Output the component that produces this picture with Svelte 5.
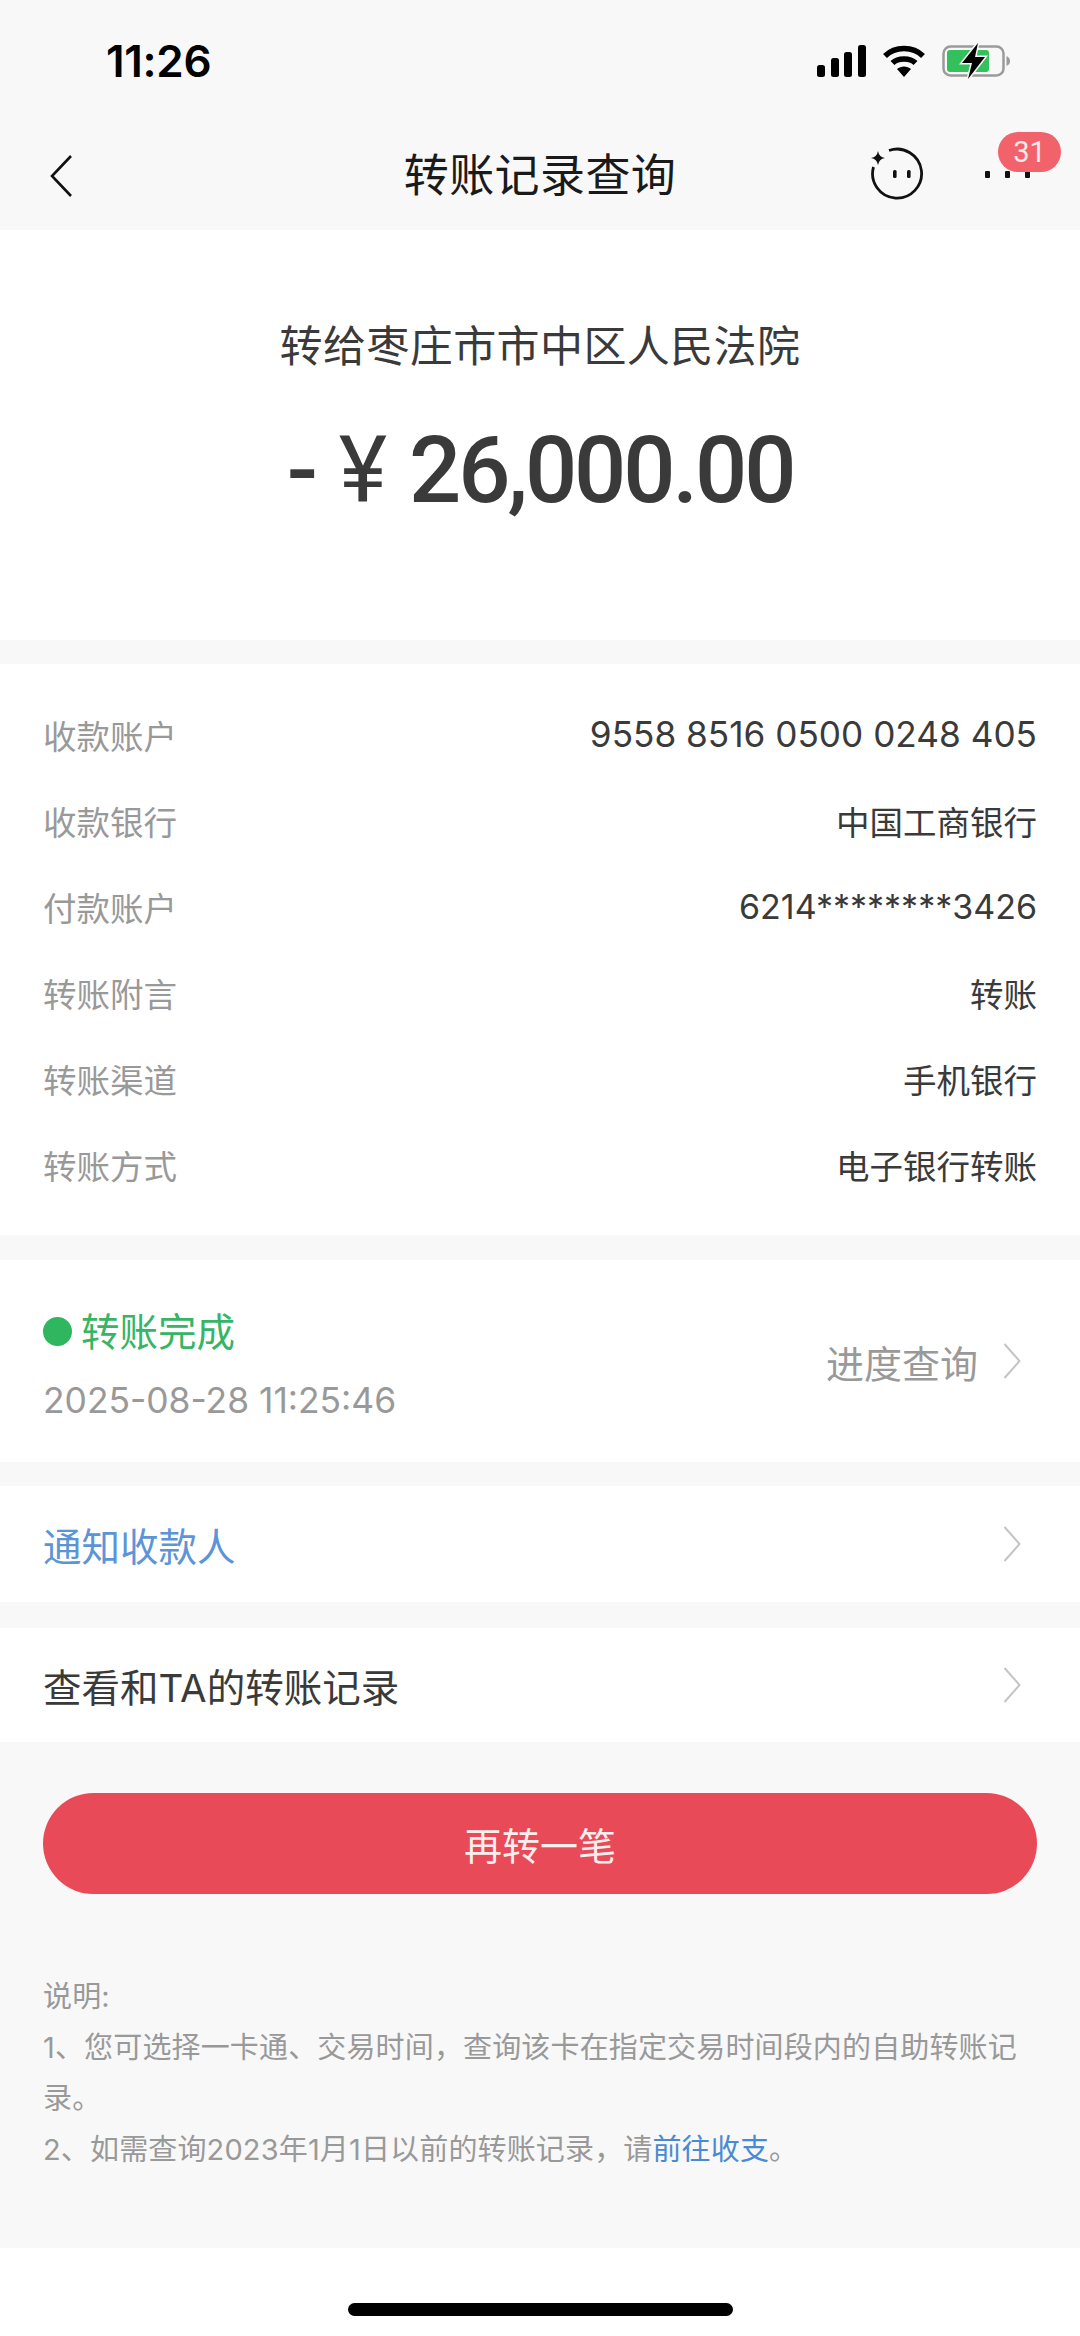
<script>
  const infoRows = [
    { label: '收款账户', value: '9558 8516 0500 0248 405', kind: 'card' },
    { label: '收款银行', value: '中国工商银行' },
    { label: '付款账户', value: '6214********3426', kind: 'masked' },
    { label: '转账附言', value: '转账' },
    { label: '转账渠道', value: '手机银行' },
    { label: '转账方式', value: '电子银行转账' }
  ];
</script>

{#snippet chevron()}
  <svg class="chevron" viewBox="0 0 18 36" width="18" height="36">
    <path d="M1.5 1 L16.5 18 L1.5 35" fill="none" stroke="#c4c4c4" stroke-width="2" />
  </svg>
{/snippet}

<div class="page">
  <header class="top">
    <div class="status">
      <span class="time">11:26</span>
      <div class="status-icons">
        <svg viewBox="0 0 50 32" width="50" height="32">
          <rect x="0" y="20" width="8" height="12" rx="2.5" />
          <rect x="14" y="13" width="8" height="19" rx="2.5" />
          <rect x="27" y="7" width="8" height="25" rx="2.5" />
          <rect x="41" y="0" width="8" height="32" rx="2.5" />
        </svg>
        <svg viewBox="0 0 42 32" width="42" height="32">
          <path d="M2 11 C12 1 30 1 40 11" fill="none" stroke="#000" stroke-width="5.5" />
          <path d="M9.5 18 C15 12.5 27 12.5 32.5 18" fill="none" stroke="#000" stroke-width="5.5" />
          <path d="M14 24 C18 20.5 24 20.5 28 24 L21 32 Z" />
        </svg>
        <svg class="battery" viewBox="0 0 70 36" width="70" height="36">
          <rect x="1.5" y="3.5" width="60" height="29" rx="7" fill="none" stroke="#9b9b9b" stroke-width="2.5" />
          <rect x="5" y="7" width="42" height="22" rx="3" fill="#34c05a" />
          <path d="M64.5 13 C67 14 68 16 68 18 C68 20 67 22 64.5 23 Z" fill="#9b9b9b" />
          <path d="M36 0 L20 20 L30 20 L26 36 L43 14 L33 14 Z" stroke="#f8f8f8" stroke-width="3" paint-order="stroke" />
        </svg>
      </div>
    </div>
    <nav class="nav">
      <svg class="back" viewBox="0 0 22 42" width="22" height="42">
        <path d="M21 1 L2 21 L21 41" fill="none" stroke="#111" stroke-width="2.6" />
      </svg>
      <h1>转账记录查询</h1>
      <svg class="face" viewBox="0 0 54 54" width="54" height="54">
        <path d="M19 4.5 A24.5 24.5 0 1 1 3.5 21" fill="none" stroke="#111" stroke-width="2.8" />
        <path d="M8 5 Q9 11 15 12 Q9 13 8 19 Q7 13 1 12 Q7 11 8 5 Z" fill="#111" />
        <rect x="23" y="24" width="3.6" height="8" rx="1.5" fill="#111" />
        <rect x="37" y="24" width="3.6" height="8" rx="1.5" fill="#111" />
      </svg>
      <div class="more">
        <i></i><i></i><i></i>
        <span class="badge">31</span>
      </div>
    </nav>
  </header>

  <section class="hero">
    <p class="payee">转给枣庄市市中区人民法院</p>
    <p class="amount"><span class="minus">-</span><span class="yen">¥</span><span>26,000.00</span></p>
  </section>

  <section class="info">
    {#each infoRows as row}
      <div class="info-row">
        <span class="label">{row.label}</span>
        <span class="value {row.kind ?? ''}">{row.value}</span>
      </div>
    {/each}
  </section>

  <section class="progress">
    <div class="progress-left">
      <div class="done"><span class="dot"></span>转账完成</div>
      <div class="date">2025-08-28 11:25:46</div>
    </div>
    <div class="progress-right">
      <span>进度查询</span>
      {@render chevron()}
    </div>
  </section>

  <section class="link-row notify">
    <span>通知收款人</span>
    {@render chevron()}
  </section>

  <section class="link-row records">
    <span>查看和TA的转账记录</span>
    {@render chevron()}
  </section>

  <div class="action">
    <button>再转一笔</button>
  </div>

  <div class="notes">
    <p>说明:</p>
    <p>1、您可选择一卡通、交易时间，查询该卡在指定交易时间段内的自助转账记录。</p>
    <p>2、如需查询2023年1月1日以前的转账记录，请<span class="go">前往收支</span>。</p>
  </div>

  <footer class="home"><span class="home-bar"></span></footer>
</div>

<style>
  :global(body) {
    margin: 0;
    background: #fff;
  }
  .page {
    width: 1080px;
    height: 2336px;
    display: flex;
    flex-direction: column;
    background: #f8f8f8;
    font-family: Inter, "Noto Sans CJK SC", sans-serif;
    color: #3a3a3a;
    overflow: hidden;
  }
  p, h1 {
    margin: 0;
    font-weight: 400;
  }
  .top {
    height: 230px;
    flex-shrink: 0;
  }
  .status {
    height: 122px;
    display: flex;
    align-items: center;
    justify-content: space-between;
    padding: 0 68px 0 106px;
  }
  .time {
    font-family: Inter, sans-serif;
    font-size: 44px;
    font-weight: 600;
    color: #000;
    letter-spacing: -0.3px;
  }
  .status-icons {
    display: flex;
    align-items: center;
    gap: 16px;
  }
  .battery {
    margin-left: 1px;
  }
  .nav {
    height: 108px;
    position: relative;
    display: flex;
    align-items: center;
    justify-content: center;
  }
  .nav h1 {
    font-size: 45px;
    letter-spacing: 0.4px;
    color: #1a1a1a;
    margin-bottom: 8px;
  }
  .back {
    position: absolute;
    left: 50px;
    top: 33px;
  }
  .face {
    position: absolute;
    left: 870px;
    top: 24px;
  }
  .more {
    position: absolute;
    left: 985px;
    top: 49px;
    display: flex;
    gap: 15px;
  }
  .more i {
    width: 5px;
    height: 7px;
    background: #111;
    border-radius: 1px;
  }
  .badge {
    position: absolute;
    left: 13px;
    top: -39px;
    width: 63px;
    height: 40px;
    border-radius: 20px;
    background: #f2626a;
    color: #fde9ea;
    font-family: Roboto, sans-serif;
    font-size: 29px;
    line-height: 40px;
    text-align: center;
  }
  .hero {
    height: 410px;
    flex-shrink: 0;
    background: #fff;
    display: flex;
    flex-direction: column;
    align-items: center;
  }
  .payee {
    margin-top: 87px;
    font-size: 43px;
    letter-spacing: 0.4px;
    line-height: 58px;
  }
  .amount {
    margin-top: 41px;
    display: flex;
    font-family: Roboto, sans-serif;
    font-size: 92px;
    font-weight: 500;
    line-height: 110px;
    letter-spacing: -3.1px;
  }
  .minus {
    margin-right: 24px;
  }
  .yen {
    font-weight: 400;
    margin-right: 25px;
  }
  .info {
    margin-top: 24px;
    height: 571px;
    flex-shrink: 0;
    box-sizing: border-box;
    padding-top: 27px;
    background: #fff;
  }
  .info-row {
    height: 86px;
    display: flex;
    align-items: center;
    justify-content: space-between;
    padding: 0 43px;
    font-size: 33.5px;
  }
  .label {
    color: #999;
  }
  .card {
    font-size: 35.2px;
  }
  .masked {
    font-size: 34px;
  }
  .progress {
    margin-top: 25px;
    height: 202px;
    flex-shrink: 0;
    display: flex;
    align-items: center;
    justify-content: space-between;
    padding: 0 59px 0 43px;
    background: #fff;
  }
  .progress-left {
    padding-top: 9px;
  }
  .done {
    display: flex;
    align-items: center;
    gap: 9px;
    font-size: 38.5px;
    line-height: 52px;
    color: #35b565;
  }
  .dot {
    width: 29px;
    height: 29px;
    border-radius: 50%;
    background: #2fb760;
  }
  .date {
    margin-top: 18px;
    font-size: 35.4px;
    line-height: 50px;
    color: #999;
  }
  .progress-right {
    display: flex;
    align-items: center;
    gap: 25px;
    font-size: 38px;
    color: #999;
  }
  .link-row {
    flex-shrink: 0;
    display: flex;
    align-items: center;
    justify-content: space-between;
    padding: 0 59px 0 43px;
    background: #fff;
    font-size: 38.5px;
  }
  .notify {
    margin-top: 24px;
    height: 116px;
    color: #5c94d8;
  }
  .records {
    margin-top: 26px;
    height: 114px;
  }
  .action {
    padding: 51px 43px 0;
    flex-shrink: 0;
  }
  button {
    display: block;
    width: 100%;
    height: 101px;
    border: 0;
    border-radius: 51px;
    background: #e84a58;
    color: #fdeeee;
    font: inherit;
    font-size: 38px;
  }
  .notes {
    margin-top: 77px;
    padding: 0 43px;
    font-size: 29px;
    letter-spacing: 0.15px;
    line-height: 51px;
    color: #999;
    flex: 1;
  }
  .go {
    color: #4a8ad4;
  }
  .home {
    height: 88px;
    flex-shrink: 0;
    background: #fff;
    display: flex;
    justify-content: center;
    padding-top: 55px;
    box-sizing: border-box;
  }
  .home-bar {
    width: 385px;
    height: 13px;
    border-radius: 7px;
    background: #000;
  }
</style>
